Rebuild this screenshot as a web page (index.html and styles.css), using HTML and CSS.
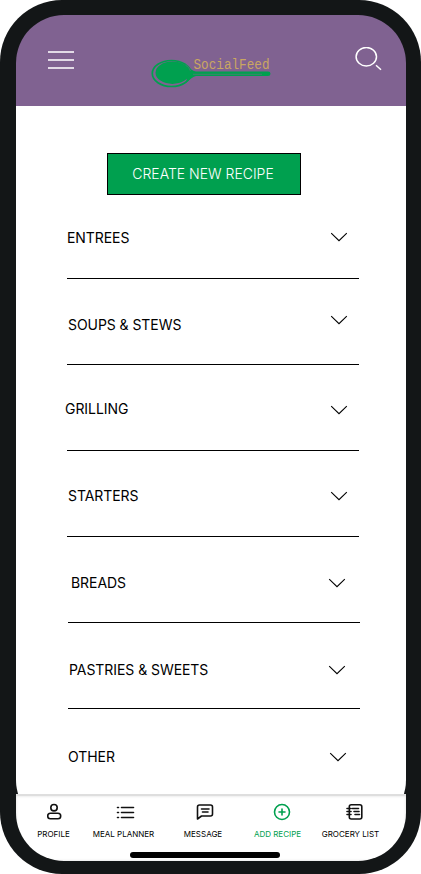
FILE: index.html
```
<!DOCTYPE html>
<html lang="en">
<head>
  <meta charset="UTF-8">
  <meta name="viewport" content="width=device-width, initial-scale=1.0">
  <title>SocialFeed - Add Recipe</title>
  <link rel="stylesheet" href="styles.css">
</head>
<body>
  <div class="phone">
    <div class="screen">
      <header>
        <svg class="menu-icon" width="28" height="20" viewBox="0 0 28 20">
          <path d="M1 2h26M1 10h26M1 18h26" stroke="#e2dae6" stroke-width="2"/>
        </svg>
        <svg class="logo" width="122" height="42" viewBox="0 -8 122 42">
          <ellipse cx="21.5" cy="18.5" rx="19.2" ry="13" fill="none" stroke="#00a04f" stroke-width="1.7"/>
          <ellipse cx="22.5" cy="17.7" rx="17" ry="11.2" fill="#00a04f"/>
          <path d="M37 10Q42 16 46 16.5H118Q120.500 16.500 120.500 18.700T118 21H46Q42 22 36 28L38 18Z" fill="#00a04f"/>
          <path d="M43 19.300H112M36 9.500Q39 12 40.500 16" fill="none" stroke="#806291" stroke-width="0.5"/>
          <text class="logo-text" x="43.500" y="14" textLength="76" lengthAdjust="spacingAndGlyphs">SocialFeed</text>
        </svg>
        <svg class="search-icon" width="28" height="26" viewBox="0 0 28 26" fill="none" stroke="#fff" stroke-width="1.500">
          <ellipse cx="11.300" cy="9.700" rx="10.200" ry="9.200"/>
          <path d="M21 18.200L26 22.700"/>
        </svg>
      </header>

      <main>
        <button class="create-btn">CREATE NEW RECIPE</button>

        <ul class="categories">
          <li class="category entrees">
            <span>ENTREES</span>
            <svg class="chevron" viewBox="0 0 18 10"><path d="M1.200 1.200l7.800 7.500 7.800-7.500"/></svg>
          </li>
          <li class="category soups">
            <span>SOUPS &amp; STEWS</span>
            <svg class="chevron" viewBox="0 0 18 10"><path d="M1.200 1.200l7.800 7.500 7.800-7.500"/></svg>
          </li>
          <li class="category grilling">
            <span>GRILLING</span>
            <svg class="chevron" viewBox="0 0 18 10"><path d="M1.200 1.200l7.800 7.500 7.800-7.500"/></svg>
          </li>
          <li class="category starters">
            <span>STARTERS</span>
            <svg class="chevron" viewBox="0 0 18 10"><path d="M1.200 1.200l7.800 7.500 7.800-7.500"/></svg>
          </li>
          <li class="category breads">
            <span>BREADS</span>
            <svg class="chevron" viewBox="0 0 18 10"><path d="M1.200 1.200l7.800 7.500 7.800-7.500"/></svg>
          </li>
          <li class="category pastries">
            <span>PASTRIES &amp; SWEETS</span>
            <svg class="chevron" viewBox="0 0 18 10"><path d="M1.200 1.200l7.800 7.500 7.800-7.500"/></svg>
          </li>
          <li class="category other">
            <span>OTHER</span>
            <svg class="chevron" viewBox="0 0 18 10"><path d="M1.200 1.200l7.800 7.500 7.800-7.500"/></svg>
          </li>
        </ul>
      </main>

      <nav>
        <div class="tabs">
          <a class="tab profile">
            <svg viewBox="0 0 20 20">
              <circle cx="10" cy="5.700" r="3.200"/>
              <rect x="3.700" y="11.300" width="13" height="5.500" rx="2.750"/>
            </svg>
            PROFILE
          </a>
          <a class="tab meals">
            <svg viewBox="0 0 20 20">
              <path d="M6.500 5.500h12M6.500 10.500h12M6.500 15.500h12"/>
              <path d="M2.500 5.500h1M2.500 10.500h1M2.500 15.500h1"/>
            </svg>
            MEAL PLANNER
          </a>
          <a class="tab message">
            <svg viewBox="0 0 20 20">
              <path d="M4.500 3h11q2 0 2 2v7q0 2-2 2H6.500L2.500 17v-12q0-2 2-2z"/>
              <path d="M6.500 7h7.500M7.500 10h5.500"/>
            </svg>
            MESSAGE
          </a>
          <a class="tab add active">
            <svg viewBox="0 0 20 20">
              <circle cx="10" cy="10" r="7.500"/>
              <path d="M10 7v6M7 10h6"/>
            </svg>
            ADD RECIPE
          </a>
          <a class="tab grocery">
            <svg viewBox="0 0 20 20">
              <rect x="4.300" y="2.700" width="12.500" height="14.300" rx="2"/>
              <path d="M2 6.500h4M2 9.500h4M2 12.500h4M7.500 6.500h6M9 9.500h5M10 12.500h4.500"/>
            </svg>
            GROCERY LIST
          </a>
        </div>
        <div class="home-bar"></div>
      </nav>
    </div>
  </div>
</body>
</html>
```
FILE: styles.css
```
* {
  margin: 0;
  padding: 0;
  box-sizing: border-box;
}

body {
  background: #fff;
  color: #000;
  font-family: "Inter", sans-serif;
}

/* Phone frame */
.phone {
  width: 421px;
  height: 874px;
  padding: 15px 15px 13px 16px;
  background: #131617;
  border-radius: 62px;
}

.screen {
  height: 846px;
  border-radius: 48px;
  overflow: hidden;
}

/* Top bar */
header {
  display: flex;
  align-items: flex-start;
  height: 91px;
  background: #806291;
}

.menu-icon {
  margin: 35px 0 0 31px;
}

.logo {
  margin: 32px 0 0 75px;
}

.logo-text {
  font-family: "Liberation Mono", monospace;
  font-size: 14.5px;
  fill: #c9a662;
}

.search-icon {
  margin: 32px 0 0 83px;
}

/* Recipe categories */
main {
  height: 722px;
  padding-top: 47px;
  background: #fff;
  border-radius: 0 0 48px 48px;
}

.create-btn {
  display: block;
  width: 194px;
  height: 42px;
  margin-left: 91px;
  border: 1px solid #000;
  background: #00a04f;
  color: #fff;
  font-family: "Inter", sans-serif;
  font-size: 14px;
  font-weight: 300;
  padding: 0 2px 2px 0;
}

.categories {
  list-style: none;
  width: 292px;
  margin-left: 51px;
}

.category {
  display: flex;
  justify-content: space-between;
  align-items: flex-start;
  height: 86px;
  padding-right: 11px;
  border-bottom: 1px solid #000;
  font-size: 14px;
  line-height: 20px;
  letter-spacing: -0.06px;
}

.chevron {
  width: 18px;
  height: 10px;
  margin-top: 5px;
  fill: none;
  stroke: #000;
  stroke-width: 1.1;
}

.entrees { height: 84px; padding-top: 33px; }
.entrees .chevron { margin-top: 4px; }
.soups { padding: 36px 11px 0 1px; }
.soups .chevron { margin-top: 0; }
.grilling { padding-top: 34px; }
.grilling span { margin-left: -2px; }
.grilling .chevron { margin-top: 6px; }
.starters { padding: 35px 11px 0 1px; }

/* lower rows sit one pixel to the right */
.breads,
.pastries,
.other { margin: 0 -1px 0 1px; }
.breads { padding: 36px 14px 0 3px; }
.pastries { padding: 37px 14px 0 1px; }
.other { padding: 38px 13px 0 0; border-bottom: none; }

/* Bottom tabs */
nav {
  position: relative;
  height: 67px;
  margin-top: -34px;
  background: #fff;
  border-top: 2px solid #dedede;
  box-shadow: inset 0 0 3px rgba(0, 0, 0, 0.15);
}

.tabs {
  display: flex;
  padding-top: 6px;
}

.tab {
  display: flex;
  flex-direction: column;
  align-items: center;
  font-size: 8px;
  line-height: 10px;
  white-space: nowrap;
}

.tab svg {
  width: 20px;
  height: 20px;
  margin-bottom: 7px;
  fill: none;
  stroke: #111;
  stroke-width: 1.6;
  stroke-linecap: round;
  stroke-linejoin: round;
}

.profile { width: 75px; }
.meals { width: 65px; }
.message { width: 94px; }
.add { width: 55px; }
.grocery { width: 91px; }

/* icons are a bit right of their labels */
.meals svg { margin-left: 3px; }
.message svg { margin-left: 4px; }
.add svg { margin-left: 8px; }
.grocery svg { margin-left: 8px; }

.active {
  color: #00a04f;
}

.active svg {
  stroke: #00a04f;
}

.home-bar {
  width: 150px;
  height: 6px;
  margin: 13px 0 0 114px;
  border-radius: 3px;
  background: #000;
}
```
